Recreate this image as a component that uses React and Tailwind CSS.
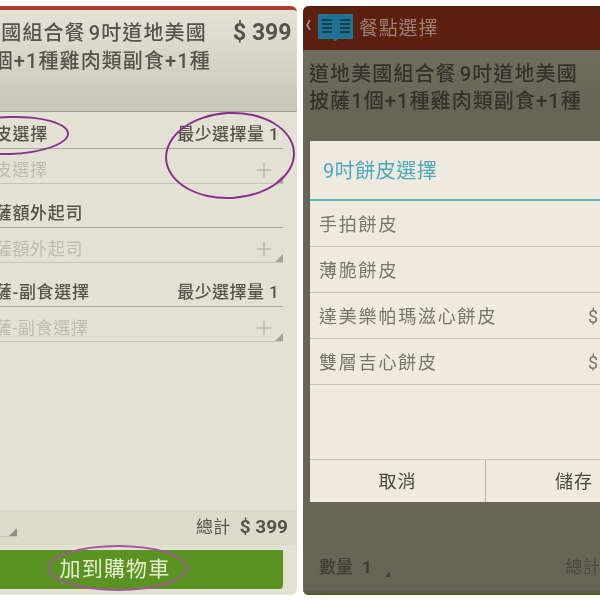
import { Plus } from "lucide-react"

const fontClass = "font-['Roboto','Noto_Sans_CJK_TC',sans-serif]"

const sections = [
  { title: "9吋餅皮選擇", min: "最少選擇量 1", cut: "-ml-[51px]" },
  { title: "披薩額外起司", cut: "-ml-[23px]" },
  { title: "披薩-副食選擇", min: "最少選擇量 1", cut: "-ml-[23px]" },
]

const options = [
  { name: "手拍餅皮" },
  { name: "薄脆餅皮" },
  { name: "達美樂帕瑪滋心餅皮", price: "$" },
  { name: "雙層吉心餅皮", price: "$" },
]

const Corner = ({ className }) => (
  <svg width="8" height="8" viewBox="0 0 8 8" className={className}>
    <path d="M8 0V8H0Z" fill="currentColor" />
  </svg>
)

const Section = ({ title, min, cut }) => (
  <div className="h-[79px] pr-[14px]">
    <div className="flex h-[36px] items-end justify-between border-b border-[#a9a89a] pb-[5px] pr-[4px] text-[17px] font-medium leading-none tracking-[0.7px] text-[#55544a]">
      <span className={`whitespace-nowrap ${cut}`}>{title}</span>
      {min && <span className="whitespace-nowrap tracking-[0.4px]">{min}</span>}
    </div>
    <div className="relative flex h-[35px] items-center justify-between border-b border-[#c4c3b5] pr-[7px] pt-[8px] text-[17px] leading-none tracking-[0.7px] text-[#bdbcae]">
      <span className={`whitespace-nowrap ${cut}`}>{title}</span>
      <Plus size={24} strokeWidth={1} className="text-[#a8a799]" />
      <Corner className="absolute bottom-0 right-0 text-[#a5a497]" />
    </div>
  </div>
)

const Ellipse = ({ className }) => (
  <div className={`absolute rounded-[50%] border-2 border-[#8b2f8c] ${className}`} />
)

const LeftPanel = () => (
  <div className="relative flex h-[589px] w-[297px] shrink-0 flex-col overflow-hidden rounded-tr-md rounded-br-md border-t-[4px] border-[#b23a27] bg-[#e3e1d3]">
    <div className="flex h-[102px] shrink-0 justify-between border-b border-[#9c9b8d] bg-gradient-to-b from-[#e5e3d7] to-[#c8c6b8] pr-[6px] pt-[9px]">
      <p className="-ml-[62px] w-[295px] shrink-0 whitespace-nowrap text-[20px] font-medium leading-[28px] tracking-[1.1px] text-[#55544a] [word-spacing:-3px]">
        道地美國組合餐 9吋道地美國
        <br />
        披薩1個+1種雞肉類副食+1種
      </p>
      <span className="whitespace-nowrap text-[23px] font-bold leading-[28px] text-[#55544a]">$ 399</span>
    </div>

    <div className="flex-1 pt-[1px]">
      {sections.map((section) => (
        <Section key={section.title} {...section} />
      ))}
    </div>

    <div className="flex h-[35px] shrink-0 items-center justify-between bg-[#dcdacb] pr-[9px]">
      <div className="relative h-[18px] w-[17px] border-b border-[#c4c3b5]">
        <Corner className="absolute bottom-0 right-0 text-[#908f82]" />
      </div>
      <div className="flex items-center gap-[9px] text-[#55544a]">
        <span className="text-[17px] tracking-[0.3px]">總計</span>
        <span className="text-[19px] font-bold">$ 399</span>
      </div>
    </div>

    <div className="h-[50px] shrink-0 pr-[14px] pt-[5px]">
      <div className="flex h-[39px] items-center justify-center rounded-br-sm bg-[#5b9323] text-[21px] leading-none tracking-[1.2px] text-[#e9eed2]">
        <span className="mr-[53px]">加到購物車</span>
      </div>
    </div>

    <Ellipse className="-left-[50px] top-[106px] h-[39px] w-[119px] -rotate-2" />
    <Ellipse className="left-[165px] top-[102px] h-[87px] w-[130px] -rotate-3" />
    <Ellipse className="left-[48px] top-[535px] h-[46px] w-[140px] border-[#a5559f]" />
  </div>
)

const RightPanel = () => (
  <div className="relative flex h-[589px] w-[297px] shrink-0 flex-col overflow-hidden rounded-tl-md rounded-bl-md bg-[#666556]">
    <div className="flex h-[44px] shrink-0 items-center gap-[4px] bg-[#5c2010] pl-[2px]">
      <svg width="50" height="30" viewBox="0 0 50 30">
        <path d="M7 15 4 20 7 25" transform="translate(-2 -8)" stroke="#a98d80" strokeWidth="1.8" fill="none" />
        <path d="M13 1H30L31 2 32 1H48V26H33L31 28H29L28 26H13Z" fill="#1d7391" />
        <path d="M17 7H27M17 11H27M17 15H27M17 19H27M35 7H45M35 11H45M35 15H45M35 19H45" stroke="#123f48" strokeWidth="1.8" />
      </svg>
      <span className="text-[19px] leading-none tracking-[0.8px] text-[#9b8074]">餐點選擇</span>
    </div>

    <div className="h-[60px] shrink-0 bg-gradient-to-b from-[#6e6d5e] to-[#666556] pl-[6px] pt-[11px]">
      <p className="w-[300px] whitespace-nowrap text-[20px] font-medium leading-[27px] tracking-[1.1px] text-[#33322a] [word-spacing:-3px]">
        道地美國組合餐 9吋道地美國
        <br />
        披薩1個+1種雞肉類副食+1種
      </p>
    </div>

    <div className="mt-auto flex h-[46px] items-center justify-between pl-[16px] pt-[2px] text-[#3f3e34]">
      <div className="flex items-center gap-[9px] font-medium">
        <span className="text-[17px]">數量</span>
        <span className="text-[17px] font-bold">1</span>
        <Corner className="ml-[4px] mt-[12px] h-[5px] w-[5px] text-[#3f3e34]" />
      </div>
      <span className="text-[17px] tracking-[0.3px] text-[#4a493f]">總計</span>
    </div>
    <div className="h-[5px] shrink-0 border-b-2 border-[#4d5a24] bg-[#5d5c50]" />

    <div className="absolute left-[7px] top-[135px] flex h-[361px] w-[320px] flex-col bg-[#eeebde]">
      <div className="flex h-[60px] shrink-0 items-center border-b-2 border-[#5fb9b9] pl-[13px] pt-[1px] text-[20px] leading-none tracking-[0.5px] text-[#4aa7bd]">
        9吋餅皮選擇
      </div>
      {options.map((option) => (
        <div
          key={option.name}
          className="flex h-[46px] shrink-0 items-center border-b border-[#c6c4b6] pl-[9px] pt-[2px] text-[18px] leading-none tracking-[1.8px] text-[#77766a]"
        >
          <span className="whitespace-nowrap">{option.name}</span>
          {option.price && <span className="absolute left-[278px]">{option.price}</span>}
        </div>
      ))}
      <div className="mt-auto flex h-[43px] shrink-0 border-t border-[#c6c4b6] text-[18px] tracking-[1px] text-[#4a493f]">
        <button className="w-[176px] border-r border-[#b5b3a6]">取消</button>
        <button className="flex-1 pl-[32px]">儲存</button>
      </div>
    </div>
  </div>
)

export default function App() {
  return (
    <div className={`flex h-[600px] w-[600px] items-start gap-[6px] overflow-hidden bg-white pt-[6px] blur-[0.4px] ${fontClass}`}>
      <LeftPanel />
      <RightPanel />
    </div>
  )
}
